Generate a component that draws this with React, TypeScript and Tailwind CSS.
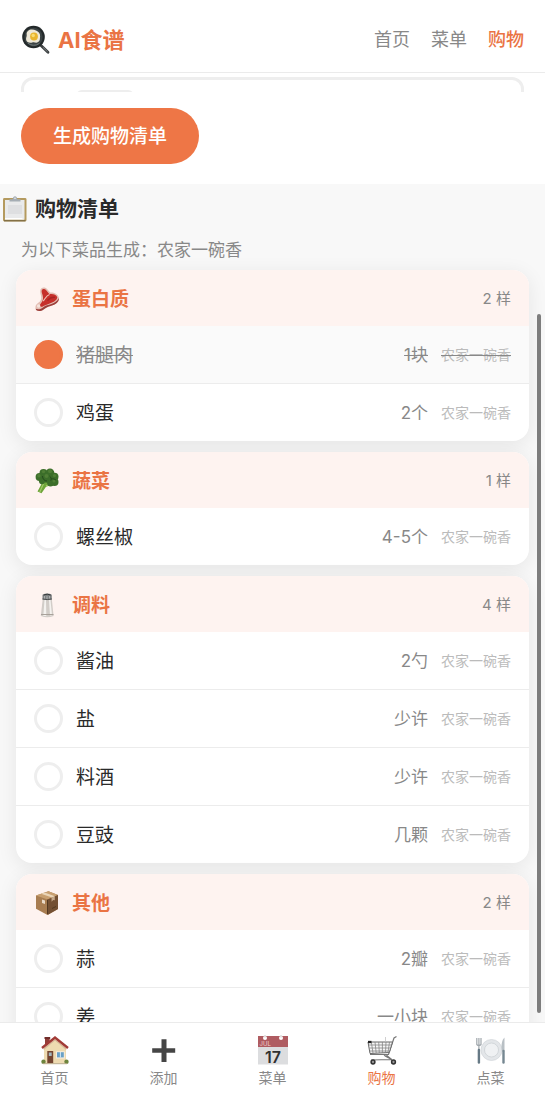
import React from "react";

type Item = { id: string; name: string; amount: string; dish: string };
type Category = { title: string; icon: React.ReactNode; items: Item[] };

const DISH = "农家一碗香";

const categories: Category[] = [
  {
    title: "蛋白质",
    icon: <MeatIcon />,
    items: [
      { id: "pork", name: "猪腿肉", amount: "1块", dish: DISH },
      { id: "egg", name: "鸡蛋", amount: "2个", dish: DISH },
    ],
  },
  {
    title: "蔬菜",
    icon: <BroccoliIcon />,
    items: [{ id: "pepper", name: "螺丝椒", amount: "4-5个", dish: DISH }],
  },
  {
    title: "调料",
    icon: <SaltIcon />,
    items: [
      { id: "soy", name: "酱油", amount: "2勺", dish: DISH },
      { id: "salt", name: "盐", amount: "少许", dish: DISH },
      { id: "wine", name: "料酒", amount: "少许", dish: DISH },
      { id: "douchi", name: "豆豉", amount: "几颗", dish: DISH },
    ],
  },
  {
    title: "其他",
    icon: <BoxIcon />,
    items: [
      { id: "garlic", name: "蒜", amount: "2瓣", dish: DISH },
      { id: "ginger", name: "姜", amount: "一小块", dish: DISH },
    ],
  },
];

const topLinks = [
  { label: "首页", href: "#home" },
  { label: "菜单", href: "#menu" },
  { label: "购物", href: "#shopping", active: true },
];

const tabs = [
  { label: "首页", href: "#home", icon: <HouseIcon /> },
  { label: "添加", href: "#add", icon: <PlusIcon /> },
  { label: "菜单", href: "#menu", icon: <CalendarIcon /> },
  { label: "购物", href: "#shopping", icon: <CartIcon />, active: true },
  { label: "点菜", href: "#order", icon: <PlateIcon /> },
];

export default function App() {
  const [checked, setChecked] = React.useState<string[]>(["pork"]);

  const toggle = (id: string) => {
    setChecked((list) => (list.includes(id) ? list.filter((x) => x !== id) : [...list, id]));
  };

  return (
    <div className="relative flex h-screen flex-col bg-[#f8f8f8] font-['Inter','Noto_Sans_CJK_SC',sans-serif] text-[#2a2a2a]">
      <header className="flex shrink-0 items-center justify-between border-b border-[#ebebeb] bg-white px-[21px] pt-6 pb-4">
        <a href="#home" className="flex items-center gap-[7px] text-[22px] leading-8 font-bold text-[#ea7444]">
          <PanIcon />
          AI食谱
        </a>
        <nav className="flex gap-[21px] text-[18px] leading-8">
          {topLinks.map((link) => (
            <a
              key={link.label}
              href={link.href}
              className={link.active ? "font-medium text-[#ea7444]" : "text-[#888888]"}
            >
              {link.label}
            </a>
          ))}
        </nav>
      </header>

      <main className="min-h-0 flex-1 overflow-y-auto [scrollbar-width:none]">
        <section className="bg-white px-[21px] pt-1 pb-5">
          <div className="h-[15px] overflow-hidden">
            <div className="h-16 rounded-xl border-3 border-[#eeeeee] px-[52px] pt-[10px]">
              <div className="h-8 w-[58px] rounded-md border-2 border-[#eeeeee]" />
            </div>
          </div>
          <button
            type="button"
            className="mt-4 h-14 rounded-full bg-[#ee7646] px-8 pt-[2px] text-[19px] leading-7 font-medium text-white"
          >
            生成购物清单
          </button>
        </section>

        <section>
          <h2 className="flex items-center gap-[7px] px-[2px] pt-[9px] text-[21px] leading-8 font-bold">
            <ClipboardIcon />
            购物清单
          </h2>
          <p className="px-[21px] pt-[13px] pb-2 text-[17px] leading-6 text-[#888888]">为以下菜品生成：{DISH}</p>

          <div className="flex flex-col gap-[11px] px-4 pb-4">
            {categories.map((category) => (
              <section
                key={category.title}
                className="overflow-hidden rounded-2xl bg-white shadow-[0_4px_20px_rgba(0,0,0,0.08)]"
              >
                <div className="flex h-14 items-center gap-3 bg-[#fef3f0] px-[18px] pt-[2px]">
                  {category.icon}
                  <h3 className="flex-1 pt-[2px] text-[19px] leading-7 font-bold text-[#ea7444]">{category.title}</h3>
                  <span className="text-[15px] leading-6 text-[#888888]">{category.items.length} 样</span>
                </div>
                <ul className="divide-y divide-[#ececec]">
                  {category.items.map((item) => (
                    <ItemRow
                      key={item.id}
                      item={item}
                      done={checked.includes(item.id)}
                      onToggle={() => toggle(item.id)}
                    />
                  ))}
                </ul>
              </section>
            ))}
          </div>
        </section>
      </main>

      {/* scroll position thumb */}
      <div className="pointer-events-none absolute top-[314px] right-1 bottom-[87px] w-1 rounded-full bg-[#7d7d7d]" />

      <nav className="grid shrink-0 grid-cols-5 border-t border-[#ebebeb] bg-white pt-3 pb-3">
        {tabs.map((tab) => (
          <a
            key={tab.label}
            href={tab.href}
            className={`flex flex-col items-center gap-[3px] text-[14px] leading-5 ${tab.active ? "text-[#ea7444]" : "text-[#888888]"}`}
          >
            {tab.icon}
            {tab.label}
          </a>
        ))}
      </nav>
    </div>
  );
}

function ItemRow({ item, done, onToggle }: { item: Item; done: boolean; onToggle: () => void }) {
  return (
    <li className={done ? "bg-[#fafafa] text-[#888888]" : ""}>
      <label className="flex h-[57px] items-center gap-[13px] px-[18px]">
        <input
          type="checkbox"
          checked={done}
          onChange={onToggle}
          className="size-[29px] shrink-0 appearance-none rounded-full border-3 border-[#eeeeee] bg-white checked:border-[#ee7646] checked:bg-[#ee7646]"
        />
        <span className={`flex-1 pt-[2px] text-[19px] leading-7 ${done ? "line-through" : ""}`}>{item.name}</span>
        <span className={`text-[17px] leading-6 text-[#888888] ${done ? "line-through" : ""}`}>{item.amount}</span>
        <span
          className={`text-[14px] leading-6 text-[#bbbbbb] ${done ? "line-through decoration-[#888888]" : ""}`}
        >
          {item.dish}
        </span>
      </label>
    </li>
  );
}

function PanIcon() {
  return (
    <svg className="size-[30px]" viewBox="0 0 30 30" aria-hidden="true">
      <path d="M20 20.5 27 27.3" stroke="#3d4142" strokeWidth="2.8" strokeLinecap="round" />
      <path d="m22 22.3 4.500 4.400" stroke="#8c9192" strokeWidth=".8" />
      <circle cx="12.5" cy="12" r="11.3" fill="#23292a" />
      <circle cx="12.5" cy="12" r="9.2" fill="#3b4344" />
      <path d="M7 6c2-2 5.500-1.700 8-.5 2.500 1.200 4.500 3 4.100 5.900-.3 2.300.2 4.300-2 5.700-2.100 1.300-3.600-.3-5.800.4-2.600.8-5.900 0-6.200-2.900-.3-2.100.9-3 .6-4.800C5.400 8.200 5.800 7.200 7 6Z" fill="#eee8d7" />
      <circle cx="13" cy="11.500" r="3.900" fill="#e9b52d" />
      <circle cx="12.200" cy="10.500" r="1.700" fill="#f8dc72" />
      <path d="M7 18c3 2.800 8 3 11.500.2" stroke="#727b7b" fill="none" />
    </svg>
  );
}

function ClipboardIcon() {
  return (
    <svg className="size-[26px]" viewBox="0 0 26 26" aria-hidden="true">
      <rect x="1" y="2" width="23.5" height="23.5" rx="1.4" fill="#b49a5e" />
      <rect x="3" y="4" width="19.5" height="19.5" fill="#e9eaeb" />
      <path d="M6 9h14v9H6z" fill="#dedfe1" />
      <path d="M3 23.5h19.5l-3-1.5H3z" fill="#fff" />
      <path d="M2 24.8h21.5" stroke="#6f603c" />
      <path d="M7.5 5.5V3.2h3.2C11 1.2 11.800 .3 13 .3s2 .9 2.300 2.900h3.200v2.300Z" fill="#a5adb4" />
      <circle cx="13" cy="2.300" r=".8" fill="#f2f2f2" />
    </svg>
  );
}

function MeatIcon() {
  return (
    <svg className="size-[26px]" viewBox="0 0 26 26" aria-hidden="true">
      <path d="M6.500 3.500C7.500 1 10.800.8 12.800 2.800l3.400 3.700c3.700-.3 7.600 1.600 8.600 4.800.7 3.200-1.600 6.300-5.400 7.700-4 1.500-6.800 2-9.800 4.400-2.800 2.200-7.200 2.200-8-.6-.7-2.400.5-4.700 2.700-6 2.600-1.600 3.400-4 2.700-7-.6-2.500-1.200-4.400-.5-6.300Z" fill="#e3bdb3" />
      <path d="M24.800 12c.5 3-1.800 5.600-5.400 7-4 1.500-6.800 2-9.800 4.400-2.800 2.200-7.200 2.200-8-.6 3.400 1.200 5.700-.2 8-1.900 3.500-2.500 12.500-2.400 15.200-8.900Z" fill="#9c3f3b" />
      <path d="M7.800 4.300C8.700 2.400 10.900 2.600 12.200 4.200l3.300 4c3.600-.5 6.700.5 7.800 3-.5 3.200-3.700 4.900-7 6-3.400 1.200-5.600 2.300-8 3.500-2.300.4-3.100-1.700-1.300-3.500 2-2 2.500-4.500 1.700-7.700-.5-2-1.400-3.600-.9-5.200Z" fill="#c62f2b" />
      <path d="M15.500 8.500c-3 .7-4 3.700-6.300 6.700" fill="none" stroke="#efc4b9" strokeWidth="1.100" />
      <path d="M13.500 14.500c2-2.500 4.500-3.500 7.500-3.200" fill="none" stroke="#a72524" strokeWidth="1.300" />
      <circle cx="4.600" cy="20" r="1.700" fill="#f5e3dc" />
    </svg>
  );
}

function BroccoliIcon() {
  return (
    <svg className="size-[26px]" viewBox="0 0 26 26" aria-hidden="true">
      <path d="M8.300 14.500 3.500 23.500l4 1.800 4.500-6.500 5.500-1.700-3-5Z" fill="#6ea53a" />
      <path d="m9.800 15-4 9M12 18l5.300-2.700" stroke="#a2c969" strokeWidth="1.200" />
      <g fill="#3c6e2a">
        <circle cx="5.500" cy="9" r="3.900" />
        <circle cx="9.500" cy="5" r="4" />
        <circle cx="16" cy="4.800" r="4.300" />
        <circle cx="20.500" cy="8.800" r="4" />
        <circle cx="20.500" cy="14" r="4" />
        <circle cx="13" cy="9.500" r="5.200" />
        <circle cx="8" cy="13.200" r="3" />
        <circle cx="16.500" cy="15.200" r="3.300" />
      </g>
      <g fill="#507f36">
        <circle cx="5" cy="7.800" r="1.700" />
        <circle cx="9.500" cy="3.600" r="1.700" />
        <circle cx="16" cy="3.300" r="2" />
        <circle cx="20.500" cy="7.500" r="1.600" />
        <circle cx="12.500" cy="8" r="2" />
        <circle cx="20" cy="13" r="1.500" />
      </g>
      <path d="M8.500 8c0 3 2 5 4.500 5M15.500 8c1.700 1 2 3 1.300 4.500M17 11c2-.5 4 0 5 1.200" stroke="#264b1e" fill="none" />
    </svg>
  );
}

function SaltIcon() {
  return (
    <svg className="size-[26px]" viewBox="0 0 26 26" aria-hidden="true">
      <path d="M8.700 7 6.800 24q6.500 2.500 12.800 0L17.800 7Z" fill="#d2cdc8" />
      <path d="m10.500 8-1.200 16h3L12 8ZM15 8l1 15.500 2-.3L16.500 8Z" fill="#f4f2ef" />
      <path d="M7 22.500h12.500" stroke="#a8a19a" />
      <path d="M8.500 7.500V2.800q4.700-2.500 9.300 0v4.700Z" fill="#7d8082" />
      <path d="M9.500 3q3.700-1.600 7.300 0" stroke="#35393b" fill="none" />
      <path d="M8.500 7q4.700 1.200 9.300 0" stroke="#494c4e" fill="none" />
      <path d="M10.500 4v2.500M13 4v3M15.500 4v2.500" stroke="#aeb1b2" />
    </svg>
  );
}

function BoxIcon() {
  return (
    <svg className="size-[26px]" viewBox="0 0 26 26" aria-hidden="true">
      <path d="m2 5.500 12.500-4.200L24 5v14l-10.500 6L2 18.800Z" fill="#a87d51" />
      <path d="m2 5.500 12.500-4.200L24 5 13.500 9.500Z" fill="#c89f70" />
      <path d="M13.500 9.500 24 5v14l-10.500 6Z" fill="#745033" />
      <path d="m7 3.800 11 3.800 3-1.300-10.500-3.800Z" fill="#ead5b8" />
      <path d="m17.500 7.700 3.300-1.400v4l-1.600-.3-1.600 1.700Z" fill="#c5a88a" />
      <path d="m8 9.500 3 1.100v3.500l-3-1Z" fill="#eadac7" />
      <path d="m18 18.500 4-2M13.500 9.800V24" stroke="#533921" />
    </svg>
  );
}

function HouseIcon() {
  return (
    <svg className="size-[30px]" viewBox="0 0 30 30" aria-hidden="true">
      <path d="M5 3.200h4.700v9H5Z" fill="#923e38" />
      <path d="M4.500 2h5.700v2H4.500Z" fill="#702d2a" />
      <path d="M4 14 15 4.500 26 14v14.200H4Z" fill="#eedbb1" />
      <path d="M15 5.500 26 15v-3L15 2.500 4 12v3Z" fill="#d9c59a" />
      <path d="m2 13 13-10.500L28 13" fill="none" stroke="#a13b36" strokeWidth="2.400" />
      <path d="m3 14.200 12-9.500 12 9.500" fill="none" stroke="#d6a298" strokeWidth=".7" />
      <path d="M7.300 16h5.900v12.200H7.300Z" fill="#744530" />
      <path d="M8.800 17.500h2.900v3.500H8.800Z" fill="#a4b8bf" />
      <path d="M16 16.300h8.800v7.200H16Z" fill="#f7efe1" />
      <path d="M17 17.200h6.800v5.200H17Z" fill="#69a1c7" />
      <path d="M20.400 17v5.500" stroke="#d9e9f2" />
      <circle cx="3.500" cy="26.800" r="2.200" fill="#6d853d" />
      <circle cx="26.500" cy="26.800" r="2.200" fill="#6d853d" />
      <path d="M3 28.700h24" stroke="#b8a887" />
    </svg>
  );
}

function PlusIcon() {
  return (
    <svg className="size-[30px]" viewBox="0 0 30 30" aria-hidden="true">
      <path d="M12.500 4.200h5v9H26.200v4.600h-8.700v9.200h-5v-9.200H3.200v-4.600h9.300Z" fill="#454545" />
    </svg>
  );
}

function CalendarIcon() {
  return (
    <svg className="size-[30px]" viewBox="0 0 30 30" aria-hidden="true">
      <path d="M0 1h30v28.500H0Z" fill="#dcdddf" />
      <path d="M0 1h30v11H0Z" fill="#af5c61" />
      <circle cx="7" cy="3" r="2" fill="#fff" />
      <circle cx="23" cy="3" r="2" fill="#fff" />
      <path d="M7 0v2.500M23 0v2.500" stroke="#ddd" strokeWidth="1.500" />
      <text x="1.500" y="10.500" fontSize="6" fill="#efd0d0">JUL</text>
      <text x="15" y="27.500" fontSize="16" fontWeight="600" textAnchor="middle" fill="#303030">17</text>
    </svg>
  );
}

function CartIcon() {
  return (
    <svg className="size-[30px]" viewBox="0 0 30 30" fill="none" aria-hidden="true">
      <path d="M29.500 1.500 27 3l-5.500 16.500H3" stroke="#777" strokeWidth="1.200" />
      <path d="M1 7h24.500l-3.200 10.500L3 18.500Z" fill="#f7f7f7" stroke="#666" />
      <path d="M4.300 7 6 18M8 7l1.200 11M11.700 7l.6 11M15.400 7v11M19 7l-.5 11M22.500 7l-1.600 11M1.700 10h23M2.300 13h21.500M2.700 16h20" stroke="#858585" strokeWidth=".8" />
      <path d="M1 7h3.500" stroke="#222" strokeWidth="2.300" />
      <path d="M19.500 19.500c0 2.500 5.500 3.500 5.500 6M17 19.500c1 3.200 6 2.500 7 5L4 25" stroke="#777" strokeWidth="1.200" />
      <path d="M18.500 2v5" stroke="#bbb" strokeWidth=".7" />
      <circle cx="6" cy="27" r="1.900" fill="#999" stroke="#333" strokeWidth="1.500" />
      <circle cx="26.500" cy="27" r="1.900" fill="#999" stroke="#333" strokeWidth="1.500" />
    </svg>
  );
}

function PlateIcon() {
  return (
    <svg className="size-[30px]" viewBox="0 0 30 30" fill="none" aria-hidden="true">
      <circle cx="15.500" cy="15" r="10.500" fill="#e3e6e9" stroke="#d0d4d8" strokeWidth=".7" />
      <circle cx="15.500" cy="15" r="7" fill="#eff1f3" stroke="#cbd0d4" strokeWidth=".8" />
      <path d="M.8 3v6.500q2 2.300 4.200 0V3M2.900 3v12" stroke="#a0a7ac" strokeWidth="1.200" />
      <path d="M2.900 15v12.500" stroke="#667985" strokeWidth="2.400" strokeLinecap="round" />
      <path d="M28.500 2.500c-3 3-3.500 8-2.500 14h2.500Z" fill="#b9c0c5" />
      <path d="M27.500 16v11.500" stroke="#758791" strokeWidth="2.400" strokeLinecap="round" />
    </svg>
  );
}
